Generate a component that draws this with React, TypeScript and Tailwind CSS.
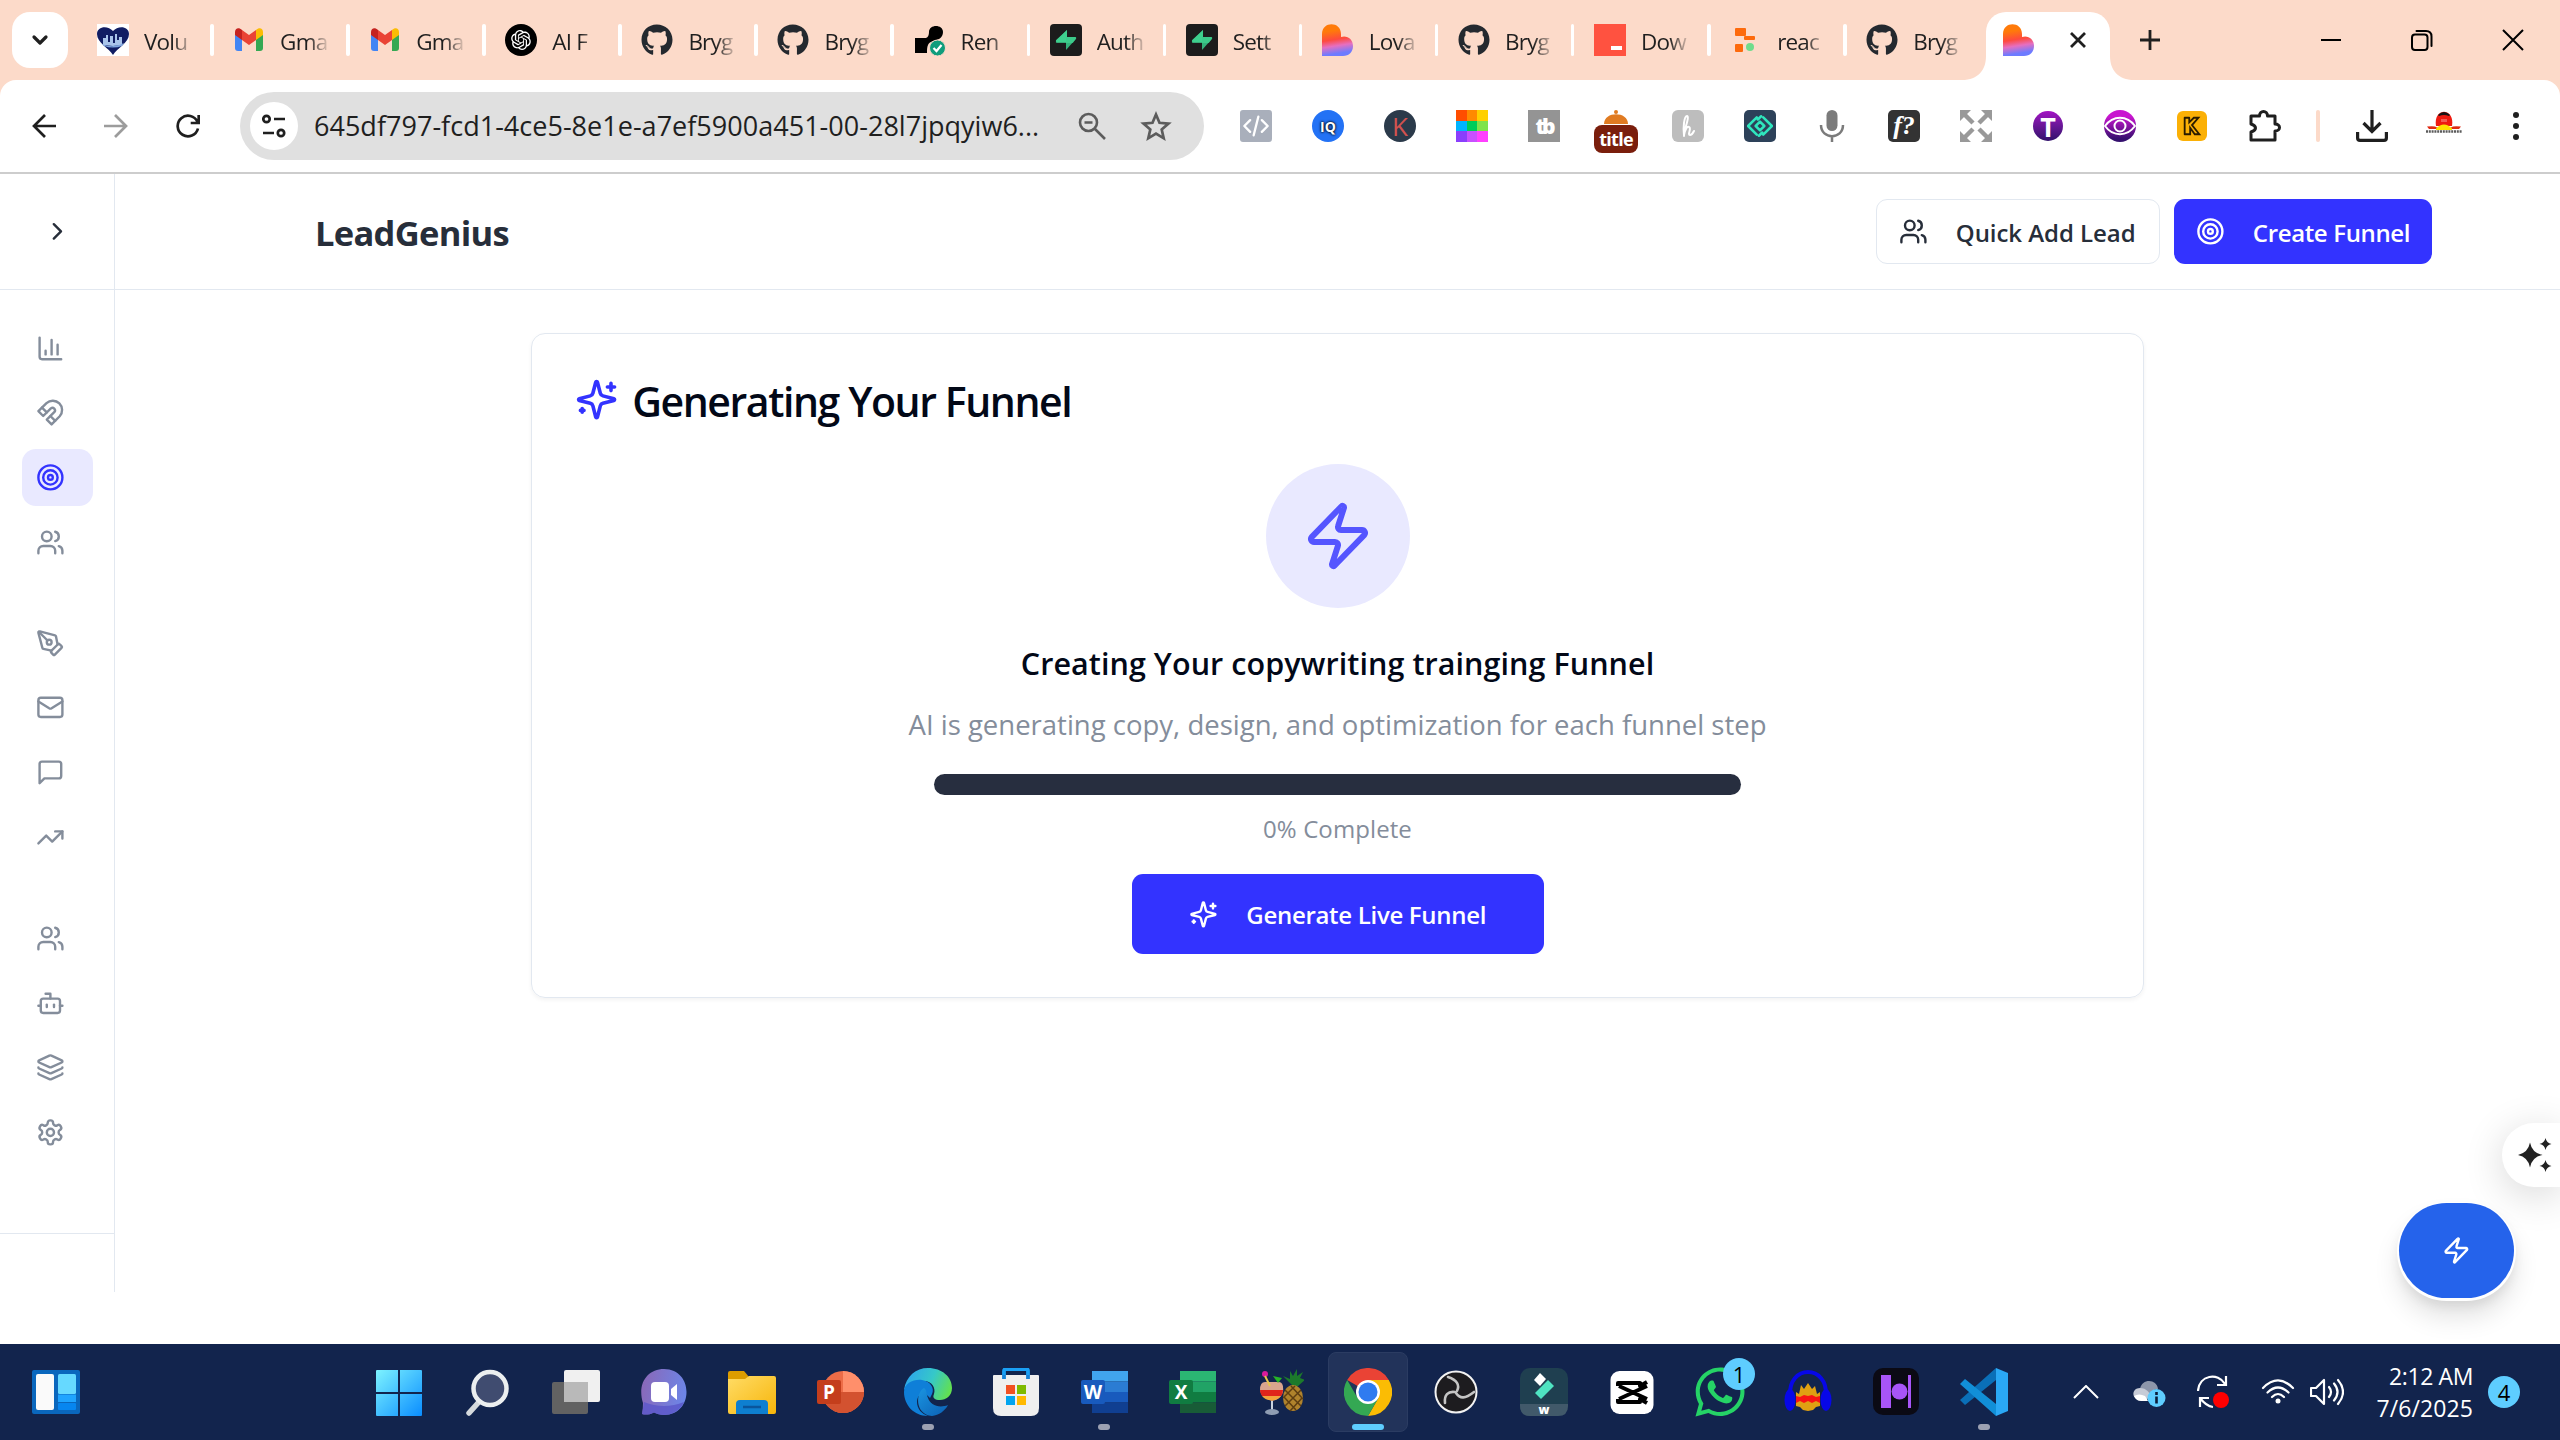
import React from "react";
import type { ReactNode } from "react";
import {
  Bot,
  ChartColumn,
  ChevronDown,
  ChevronRight,
  Layers,
  Mail,
  PenTool,
  Target,
  TrendingUp,
  Users,
  Zap,
} from "lucide-react";
import { FaGithub, FaWhatsapp } from "react-icons/fa";
import { RiOpenaiFill } from "react-icons/ri";

/* ---------- outline icons ---------- */

function Outline({ className, children }: { className: string; children: ReactNode }) {
  return (
    <svg
      viewBox="0 0 24 24"
      fill="none"
      stroke="currentColor"
      strokeWidth="2"
      strokeLinecap="round"
      strokeLinejoin="round"
      className={className}
    >
      {children}
    </svg>
  );
}

type IconProps = { className: string };

const Sparkles = ({ className }: IconProps) => (
  <Outline className={className}>
    <path d="M9.937 15.5A2 2 0 0 0 8.5 14.063l-6.135-1.582a.5.5 0 0 1 0-.962L8.5 9.936A2 2 0 0 0 9.937 8.5l1.582-6.135a.5.5 0 0 1 .963 0L14.063 8.5A2 2 0 0 0 15.5 9.937l6.135 1.581a.5.5 0 0 1 0 .964L15.5 14.063a2 2 0 0 0-1.437 1.437l-1.582 6.135a.5.5 0 0 1-.963 0z" />
    <path d="M20 3v4M22 5h-4M4 17v2M5 18H3" />
  </Outline>
);
const Magnet = ({ className }: IconProps) => (
  <Outline className={className}>
    <path d="m6 15-4-4 6.75-6.77a7.79 7.79 0 0 1 11 11L13 22l-4-4 6.39-6.36a2.14 2.14 0 0 0-3-3L6 15" />
    <path d="m5 8 4 4M12 15l4 4" />
  </Outline>
);
const Message = ({ className }: IconProps) => (
  <Outline className={className}>
    <path d="M21 15a2 2 0 0 1-2 2H7l-4 4V5a2 2 0 0 1 2-2h14a2 2 0 0 1 2 2z" />
  </Outline>
);
const Gear = ({ className }: IconProps) => (
  <Outline className={className}>
    <path d="M12.22 2h-.44a2 2 0 0 0-2 2v.18a2 2 0 0 1-1 1.73l-.43.25a2 2 0 0 1-2 0l-.15-.08a2 2 0 0 0-2.73.73l-.22.38a2 2 0 0 0 .73 2.73l.15.1a2 2 0 0 1 1 1.72v.51a2 2 0 0 1-1 1.74l-.15.09a2 2 0 0 0-.73 2.73l.22.38a2 2 0 0 0 2.73.73l.15-.08a2 2 0 0 1 2 0l.43.25a2 2 0 0 1 1 1.73V20a2 2 0 0 0 2 2h.44a2 2 0 0 0 2-2v-.18a2 2 0 0 1 1-1.73l.43-.25a2 2 0 0 1 2 0l.15.08a2 2 0 0 0 2.73-.73l.22-.39a2 2 0 0 0-.73-2.73l-.15-.08a2 2 0 0 1-1-1.74v-.5a2 2 0 0 1 1-1.74l.15-.09a2 2 0 0 0 .73-2.73l-.22-.38a2 2 0 0 0-2.73-.73l-.15.08a2 2 0 0 1-2 0l-.43-.25a2 2 0 0 1-1-1.73V4a2 2 0 0 0-2-2z" />
    <circle cx="12" cy="12" r="3" />
  </Outline>
);

/* ---------- favicons ---------- */

const HeartCity = () => (
  <svg viewBox="0 0 32 32" className="size-8">
    <rect width="32" height="32" fill="#fff" />
    <path d="M16 31C12 24 0 19 0 10 0 2 11 1 16 7c5-6 16-5 16 3 0 9-12 14-16 21z" fill="#111d63" />
    <path d="M6 21v-7h3V11h2v7h2V12h3v7h2v-9h2v6h2v-3h3v8l-9 1z" fill="#a9c4ea" />
    <path d="M5 20q11 5 22-1l-2 3q-9 3-18 0z" fill="#7fa6df" />
  </svg>
);
const Gmail = () => (
  <svg viewBox="0 0 32 32" className="size-8">
    <path d="M2 10v14a3 3 0 0 0 3 3h4V14z" fill="#4285f4" />
    <path d="M30 10v14a3 3 0 0 1-3 3h-4V14z" fill="#34a853" />
    <path d="M23 8v8l7-5V8c0-4-4-5-7-2z" fill="#fbbc04" />
    <path d="M9 6l7 5 7-5v10l-7 5-7-5z" fill="#ea4335" />
    <path d="M2 8v3l7 5V6C6 3 2 4 2 8z" fill="#c5221f" />
  </svg>
);
const ChatGpt = () => (
  <div className="flex size-8 items-center justify-center rounded-full bg-black text-white">
    <RiOpenaiFill className="size-[24px]" />
  </div>
);
const Github = () => <FaGithub className="size-8 text-[#24292f]" />;
const Render = () => (
  <svg viewBox="0 0 32 32" className="size-8">
    <path d="M1 29V14h11q3-1 3-6c0-8 14-8 14 0 0 6-5 8-10 9-5 2-6 4-6 12z" fill="#000" />
    <circle cx="23.500" cy="24" r="8" fill="#0f9d7c" stroke="#fcdac9" strokeWidth="1" />
    <path d="M19.500 24l3 3 5-6" fill="none" stroke="#fff" strokeWidth="2.200" />
  </svg>
);
const Supabase = () => (
  <svg viewBox="0 0 32 32" className="size-8">
    <rect width="32" height="32" rx="4" fill="#1c1c1c" />
    <path d="M17 6v12H7c-1 0-1.500-1-.8-2z" fill="#3ecf8e" />
    <path d="M16 26V13h9c1.200 0 1.600 1 .8 2z" fill="#34b27b" />
    <path d="M17 6v7h8c1.200 0 1.600 1 .8 2l-3 4H7c-1 0-1.500-1-.8-2z" fill="#3ecf8e" opacity=".8" />
  </svg>
);
const Lovable = () => (
  <svg viewBox="0 0 32 32" className="size-8">
    <defs>
      <linearGradient id="lovable" x1="0.350" y1="0" x2="0.500" y2="1">
        <stop offset="0.200" stopColor="#ff7a0a" />
        <stop offset="0.480" stopColor="#fe4a3e" />
        <stop offset="0.680" stopColor="#e66fc0" />
        <stop offset="0.920" stopColor="#6d7bff" />
      </linearGradient>
    </defs>
    <path d="M0 32V10C0-3 19-3 19 10v3c6-2 12 2 12 9 0 6-4 10-10 10z" fill="url(#lovable)" />
  </svg>
);
const RedBlock = () => (
  <div className="flex size-8 items-end justify-end bg-[#ff5240] pr-1 pb-[6px]">
    <div className="h-1 w-[11px] bg-white" />
  </div>
);
const Replit = () => (
  <svg viewBox="0 0 32 32" className="size-8">
    <rect x="5" y="4" width="11" height="8" rx="1" fill="#fd6a0c" />
    <rect x="14" y="12" width="11" height="4" rx="1" fill="#fd6a0c" />
    <rect x="5" y="20" width="8" height="8" rx="1" fill="#fd6a0c" />
    <circle cx="20" cy="23" r="4" fill="#6fdc8c" />
  </svg>
);

const tabs: { icon: ReactNode; label: string }[] = [
  { icon: <HeartCity />, label: "Volu" },
  { icon: <Gmail />, label: "Gma" },
  { icon: <Gmail />, label: "Gma" },
  { icon: <ChatGpt />, label: "AI F" },
  { icon: <Github />, label: "Bryg" },
  { icon: <Github />, label: "Bryg" },
  { icon: <Render />, label: "Ren" },
  { icon: <Supabase />, label: "Auth" },
  { icon: <Supabase />, label: "Sett" },
  { icon: <Lovable />, label: "Lova" },
  { icon: <Github />, label: "Bryg" },
  { icon: <RedBlock />, label: "Dow" },
  { icon: <Replit />, label: "reac" },
  { icon: <Github />, label: "Bryg" },
];

function TabStrip() {
  return (
    <div className="flex h-20 bg-[#fcdac9]">
      <div className="mt-3 ml-3 flex size-14 items-center justify-center rounded-[18px] bg-white">
        <ChevronDown className="size-6 text-[#1f1f1f]" strokeWidth={3.2} />
      </div>
      <div className="flex pt-6 pl-7">
        {tabs.map((t, i) => (
          <div key={i} className="flex h-8 w-[136.1px] shrink-0">
            <div className="ml-px size-8">{t.icon}</div>
            <div className="ml-[15px] w-[47px] text-[22.5px] leading-[35px] tracking-[-0.8px] whitespace-nowrap text-[#1f1f1f] [mask-image:linear-gradient(to_right,black_60%,rgba(0,0,0,0.15))]">
              {t.label}
            </div>
            {i < tabs.length - 1 && <div className="ml-[19px] h-8 w-[3.500px] rounded-sm bg-white" />}
          </div>
        ))}
      </div>
      <div className="-ml-[39px] flex pt-3">
        <svg viewBox="0 0 24 24" className="mt-11 size-6 text-white">
          <path d="M24 24H0C16 24 24 14 24 0z" fill="currentColor" />
        </svg>
        <div className="flex h-[68px] w-[124px] items-start rounded-t-[20px] bg-white pt-3 pl-[17px]">
          <Lovable />
          <Outline className="mt-1 ml-[31px] size-6 text-[#1f1f1f]">
            <path d="M5 5l14 14M19 5L5 19" strokeWidth="2.800" strokeLinecap="butt" />
          </Outline>
        </div>
        <svg viewBox="0 0 24 24" className="mt-11 size-6 text-white">
          <path d="M0 24h24C8 24 0 14 0 0z" fill="currentColor" />
        </svg>
      </div>
      <Outline className="mt-7 ml-1 size-6 text-[#1f1f1f]">
        <path d="M12 2v20M2 12h20" strokeWidth="2.800" strokeLinecap="butt" />
      </Outline>
      <div className="mr-[35px] ml-auto flex gap-[67px] pt-7 text-black">
        <Outline className="size-6">
          <path d="M2 12h20" strokeLinecap="butt" />
        </Outline>
        <Outline className="size-6">
          <rect x="2" y="6.500" width="15.500" height="15.500" rx="3" />
          <path d="M6.500 3H16q5.500 0 5.500 5.500V18" />
        </Outline>
        <Outline className="size-6">
          <path d="M2 2l20 20M22 2L2 22" strokeLinecap="butt" />
        </Outline>
      </div>
    </div>
  );
}

/* ---------- toolbar ---------- */

const extensions: ReactNode[] = [
  <div className="flex size-8 items-center justify-center rounded-[3px] bg-[#a9afbb]">
    <Outline className="size-7 text-white">
      <path d="M7 7l-5 5 5 5M17 7l5 5-5 5M14 4l-4 16" />
    </Outline>
  </div>,
  <div className="flex size-8 items-center justify-center rounded-full bg-[#2372f5] text-[14px] font-bold text-white [text-shadow:0_0_2px_black,0_0_3px_black]">
    IQ
  </div>,
  <div className="flex size-8 items-center justify-center rounded-full bg-[#2b3a4a] text-[26px] leading-none font-medium text-[#d2524f]">
    K
  </div>,
  <div className="grid size-8 grid-cols-3 grid-rows-3">
    <i className="bg-[#ff4d00]" />
    <i className="bg-[#ff8a00]" />
    <i className="bg-[#ffd000]" />
    <i className="bg-[#00b4ff]" />
    <i className="bg-[#00cc5a]" />
    <i className="bg-[#7fe34a]" />
    <i className="bg-[#8a3ffc]" />
    <i className="bg-[#c850ff]" />
    <i className="bg-[#ff40ff]" />
  </div>,
  <div className="flex size-8 items-center justify-center bg-[#949494] text-[21px] leading-none font-extrabold tracking-[-3px] text-white">
    tb
  </div>,
  <div className="flex h-[44px] w-11 flex-col items-center">
    <svg viewBox="0 0 26 14" className="h-[14px] w-[26px]">
      <circle cx="13" cy="2" r="2" fill="#e07b22" />
      <path d="M1 14C1 1 25 1 25 14z" fill="#e07b22" />
    </svg>
    <div className="mt-px flex h-[28px] w-11 items-center justify-center rounded-[8px] bg-[#7a1e0c] text-[18px] leading-none font-bold tracking-[-0.7px] text-white">
      title
    </div>
  </div>,
  <div className="flex size-8 items-center justify-center rounded-[6px] bg-[#bdbdbd]">
    <Outline className="size-6 text-white">
      <path d="M8 22c0-7 6-19 3-20-3 0-4 12-3 19 1-5 3-9 5-8 3 1-2 8 1 8 2 0 3-2 4-4" />
    </Outline>
  </div>,
  <div className="flex size-8 items-center justify-center rounded-[5px] bg-[#2d4159]">
    <Outline className="size-[26px] text-[#2fe6bd]">
      <path d="M9 4l-8 8 8 8M15 4l8 8-8 8M12 8l-4 4 4 4 4-4zM13 3l-3 3M11 21l3-3" strokeWidth="2.300" />
    </Outline>
  </div>,
  <svg viewBox="0 0 32 32" className="size-8">
    <rect x="10.500" y="0" width="11" height="21" rx="5.500" fill="#7b7b7b" />
    <path d="M5 15c0 15 22 15 22 0M16 26v6" fill="none" stroke="#7b7b7b" strokeWidth="2.500" />
  </svg>,
  <div className="flex size-8 items-center justify-center rounded-[5px] bg-[#333] font-['Liberation_Serif',serif] text-[26px] leading-none font-bold text-white italic">
    f?
  </div>,
  <svg viewBox="0 0 32 32" className="size-8" fill="#999" stroke="#999" strokeWidth="4.500">
    <path d="M5 5l8 8M27 5l-8 8M5 27l8-8M27 27l-8-8" />
    <path d="M0 0h11L0 11zM32 0H21l11 11zM0 32h11L0 21zM32 32H21l11-11z" stroke="none" />
  </svg>,
  <div className="flex size-[30px] items-center justify-center rounded-full bg-linear-to-b from-[#a312c4] to-[#31106b] text-[27px] leading-none font-bold text-white">
    T
  </div>,
  <svg viewBox="0 0 32 32" className="size-8">
    <defs>
      <linearGradient id="eye" x1="0" y1="0" x2="0" y2="1">
        <stop offset="0.200" stopColor="#c915d0" />
        <stop offset="0.900" stopColor="#35106e" />
      </linearGradient>
    </defs>
    <circle cx="16" cy="16" r="16" fill="url(#eye)" />
    <path d="M1 16c8-11 22-11 30 0-8 11-22 11-30 0z" fill="none" stroke="#fff" strokeWidth="2" />
    <circle cx="16" cy="16" r="5.500" fill="none" stroke="#fff" strokeWidth="2" />
  </svg>,
  <div className="flex size-[30px] items-center justify-center rounded-[6px] bg-[#fbb006]">
    <Outline className="size-[22px] text-[#2b1c00]">
      <path d="M4 3v18M9 3v5l5-5h5l-7 8 8 10h-5l-5-7v7H4M4 3h5" strokeLinejoin="miter" />
    </Outline>
  </div>,
  <svg viewBox="0 0 36 36" className="size-9">
    <path
      d="M5 8h8.500c0-6 8-6 8 0H29v8c6 0 6 7 0 7v9H5v-8c6-2 6-6 0-8z"
      fill="none"
      stroke="#1f1f1f"
      strokeWidth="3"
      strokeLinejoin="round"
    />
  </svg>,
];

function Toolbar() {
  return (
    <div className="h-[94px] bg-[#fcdac9]">
      <div className="flex h-[94px] items-center rounded-t-[16px] border-b-2 border-[#cdcdcd] bg-white">
        <div className="ml-8 flex gap-12 text-[#1f1f1f]">
          <Outline className="size-6">
            <path d="M24 12H2.500M13 1L2 12l11 11" strokeWidth="2.700" strokeLinecap="butt" strokeLinejoin="miter" />
          </Outline>
          <Outline className="size-6 text-[#9c9c9c]">
            <path d="M0 12h21.500M11 1l11 11-11 11" strokeWidth="2.700" strokeLinecap="butt" strokeLinejoin="miter" />
          </Outline>
          <Outline className="size-6">
            <path d="M22 14.500A10.300 10.300 0 1 1 21.500 8M22.700 1v8h-8" strokeWidth="2.700" strokeLinecap="butt" strokeLinejoin="miter" />
          </Outline>
        </div>
        <div className="ml-10 flex h-[68px] w-[964px] items-center rounded-full bg-[#e0e0e0]">
          <div className="ml-[10px] flex size-12 items-center justify-center rounded-full bg-white">
            <Outline className="size-6 text-[#1f1f1f]">
              <g strokeWidth="2.700" strokeLinecap="butt">
                <circle cx="4.500" cy="5" r="3.200" />
                <path d="M12 5h11M1 19h11" />
                <circle cx="19" cy="19" r="3.200" />
              </g>
            </Outline>
          </div>
          <div className="ml-4 w-[730px] text-[27px] leading-[36px] tracking-[0.02px] whitespace-nowrap text-[#1f1f1f]">
            645df797-fcd1-4ce5-8e1e-a7ef5900a451-00-28l7jpqyiw6...
          </div>
          <svg viewBox="0 0 28 28" className="ml-[34px] size-7" fill="none" stroke="#5c5c5c" strokeWidth="2.600">
            <circle cx="10.500" cy="10.500" r="8.500" />
            <path d="M17 17l10 10M6.500 10.500h8" />
          </svg>
          <svg viewBox="0 0 32 32" className="ml-[34px] size-8" fill="none" stroke="#5c5c5c" strokeWidth="2.700">
            <path d="M16 4.500l3.500 8.300 9 .8-6.800 5.900 2 8.800L16 23.600l-7.700 4.700 2-8.800-6.800-5.900 9-.8z" />
          </svg>
        </div>
        <div className="ml-4 flex">
          {extensions.map((e, i) => (
            <div key={i} className="flex h-8 w-[72px] items-center justify-center">
              {i === 5 ? <div className="pt-3">{e}</div> : e}
            </div>
          ))}
        </div>
        <div className="ml-4 h-8 w-1 rounded-sm bg-[#fcdac9]" />
        <svg viewBox="0 0 32 32" className="ml-9 size-8" fill="none" stroke="#1f1f1f" strokeWidth="3.200">
          <path d="M16 0v21M7.500 13l8.500 8.500 8.500-8.500M1.600 22v6q0 2.400 2.400 2.400h24q2.400 0 2.400-2.400v-6" />
        </svg>
        <svg viewBox="0 0 40 24" className="mt-[-6px] ml-9 h-6 w-10">
          <path d="M12 15c-3-19 19-19 16 0z" fill="#ef1a10" />
          <path d="M14 4q6-6 12 0l-1 1q-5-2-10 0z" fill="#151515" />
          <rect x="17" y="8" width="6" height="3" fill="#fbb" opacity=".4" />
          <path d="M3 15.500q8-1 10 1h14q2-2 10-1l-2 2.500H5z" fill="#e02a12" />
          <path d="M12 17.500q8-8 16 0v1.500H12z" fill="#ffe100" />
          <path d="M2 20.500h36" stroke="#5b5b5b" strokeWidth="2.500" strokeDasharray="2 .8" />
        </svg>
        <svg viewBox="0 0 8 32" className="ml-12 h-8 w-2 text-[#1f1f1f]" fill="currentColor">
          <circle cx="4" cy="5" r="3" />
          <circle cx="4" cy="16" r="3" />
          <circle cx="4" cy="27" r="3" />
        </svg>
      </div>
    </div>
  );
}

/* ---------- application ---------- */

const icon = "size-[28.8px]";
const navGroups: ReactNode[][] = [
  [<ChartColumn className={icon} />, <Magnet className={icon} />, <Target className={icon} />, <Users className={icon} />],
  [<PenTool className={icon} />, <Mail className={icon} />, <Message className={icon} />, <TrendingUp className={icon} />],
  [<Users className={icon} />, <Bot className={icon} />, <Layers className={icon} />, <Gear className={icon} />],
];

function Sidebar() {
  return (
    <aside className="flex h-[1118px] w-[115px] shrink-0 flex-col border-r border-[#e2e8f0]">
      <div className="flex h-[116px] items-center justify-center border-b border-[#e2e8f0]">
        <ChevronRight className="size-[28.8px] text-[#272e3a]" />
      </div>
      <nav className="flex flex-1 flex-col gap-[43.2px] pt-[29.2px] pl-[21.6px] text-[#848d9b]">
        {navGroups.map((g, gi) => (
          <div key={gi} className="flex flex-col gap-[7.200px]">
            {g.map((item, i) => (
              <div
                key={i}
                className={
                  gi === 0 && i === 2
                    ? "flex h-[57.6px] w-[71px] items-center rounded-[14px] bg-[#e9e9ff] pl-[14.4px] text-[#3333ff]"
                    : "flex h-[57.6px] w-[71px] items-center pl-[14.4px]"
                }
              >
                {item}
              </div>
            ))}
          </div>
        ))}
      </nav>
      <div className="h-[59px] border-t border-[#e2e8f0]" />
    </aside>
  );
}

function Header() {
  return (
    <header className="flex h-[116px] items-center border-b border-[#e2e8f0] pr-32 pl-[200px] text-[#272e3a]">
      <h1 className="pt-[2px] text-[34.5px] leading-[50px] font-bold tracking-[-0.7px]">LeadGenius</h1>
      <div className="ml-auto flex gap-[14px] text-[24px] font-semibold">
        <button className="flex h-[65px] w-[284px] items-center rounded-[11px] border border-[#e2e8f0] pl-[22px]">
          <Users className="size-[28.8px]" />
          <span className="ml-[28px] pt-[2px] tracking-[-0.05px] whitespace-nowrap">Quick Add Lead</span>
        </button>
        <button className="flex h-[65px] w-[258px] items-center rounded-[11px] bg-[#3333ff] pl-[22px] text-white">
          <Target className="size-[28.8px]" />
          <span className="ml-[28px] pt-[2px] tracking-[-0.35px] whitespace-nowrap">Create Funnel</span>
        </button>
      </div>
    </header>
  );
}

function FunnelCard() {
  return (
    <section className="mt-[43px] ml-[416px] flex h-[665px] w-[1613px] flex-col items-center rounded-[14px] border border-[#e2e8f0] px-[43px] pt-[43px] shadow-[0_2px_4px_rgba(0,0,0,0.05)]">
      <div className="flex h-[45px] w-full items-center">
        <Sparkles className="size-[43.2px] text-[#3333ff]" />
        <h2 className="ml-[14px] pt-[3px] text-[41px] leading-[45px] font-semibold tracking-[-1.42px] whitespace-nowrap text-[#020817]">
          Generating Your Funnel
        </h2>
      </div>
      <div className="mt-[42px] flex size-36 items-center justify-center rounded-full bg-[#e9e9ff]">
        <Zap className="size-[72px] text-[#5555ff]" />
      </div>
      <h3 className="mt-[30px] text-[30.5px] leading-[50px] font-semibold tracking-[0.06px] whitespace-nowrap text-[#020817]">
        Creating Your copywriting trainging Funnel
      </h3>
      <p className="mt-[15px] text-[27.5px] leading-[44px] whitespace-nowrap text-[#848d9b]">
        AI is generating copy, design, and optimization for each funnel step
      </p>
      <div className="mt-[27px] h-[21px] w-[807px] rounded-full bg-[#272e3f]" />
      <p className="mt-4 text-[24px] leading-9 tracking-[0.1px] whitespace-nowrap text-[#848d9b]">0% Complete</p>
      <button className="mt-[27px] flex h-20 w-[412px] items-center rounded-[11px] bg-[#3333ff] pl-[57px] text-[24px] font-semibold tracking-[-0.3px] text-white">
        <Sparkles className="size-[28.8px]" />
        <span className="ml-[29px] pt-px whitespace-nowrap">Generate Live Funnel</span>
      </button>
    </section>
  );
}

function FloatingButtons() {
  return (
    <>
      <div className="absolute top-[949px] right-0 flex h-16 w-[58px] items-center rounded-l-full bg-white pl-4 shadow-[0_8px_40px_rgba(0,0,0,0.16)]">
        <svg viewBox="0 0 34 34" className="size-[34px] text-[#222]" fill="currentColor">
          <path d="M12 4.500Q14 15 24.500 17 14 19 12 29.500 10 19 -.5 17 10 15 12 4.500z" />
          <path d="M27.500 0Q28.500 5 33.500 6 28.500 7 27.500 12 26.500 7 21.500 6 26.500 5 27.500 0z" />
          <path d="M27.500 22Q28.500 27 33.500 28 28.500 29 27.500 34 26.500 29 21.500 28 26.500 27 27.500 22z" />
        </svg>
      </div>
      <div className="absolute top-[1029px] right-[46px] flex h-[95px] w-[115px] items-center justify-center rounded-full bg-[#2563eb] text-white shadow-[0_1px_0_2px_#fff,0_18px_27px_rgba(0,0,0,0.12),0_7px_12px_rgba(0,0,0,0.08)]">
        <Zap className="size-[28.8px]" />
      </div>
    </>
  );
}

/* ---------- taskbar ---------- */

function Office({ letter, plate, bands }: { letter: string; plate: string; bands: string[] }) {
  return (
    <svg viewBox="0 0 48 48" className="size-12">
      {bands.map((b, i) => (
        <rect key={i} x="12" y={3 + i * 10.5} width="36" height="10.500" fill={b} />
      ))}
      <rect x="1" y="12" width="24" height="24" rx="2" fill={plate} />
      <text x="13" y="31" textAnchor="middle" fontSize="19" fontWeight="700" fill="#fff">
        {letter}
      </text>
    </svg>
  );
}

type App = { art: ReactNode; mark?: "dot" | "active" };

const apps: App[] = [
  {
    art: (
      <svg viewBox="1 0 48 48" className="size-12">
        <defs>
          <linearGradient id="win" x1="0" y1="0" x2="1" y2="1">
            <stop offset="0" stopColor="#7df3ff" />
            <stop offset="1" stopColor="#0a8dff" />
          </linearGradient>
        </defs>
        <path d="M1 3q0-1 1-1h21v22H1zM25 2h21q1 0 1 1v21H25zM1 26h22v22H2q-1 0-1-1zM25 26h22v21q0 1-1 1H25z" fill="url(#win)" />
      </svg>
    ),
  },
  {
    art: (
      <svg viewBox="0 0 48 48" className="size-12">
        <path d="M14 35L5 45" stroke="#d5dadd" strokeWidth="5.500" strokeLinecap="round" />
        <circle cx="26" cy="20.500" r="16.500" fill="#404c70" stroke="#eceff0" strokeWidth="4.500" />
      </svg>
    ),
  },
  {
    art: (
      <svg viewBox="0 0 48 48" className="size-12">
        <rect x="0" y="14" width="36" height="32" rx="2" fill="#626262" />
        <rect x="12" y="2" width="36" height="32" rx="2" fill="#f0f0f0" />
        <rect x="12" y="14" width="24" height="20" fill="#b9b9b9" />
      </svg>
    ),
  },
  {
    art: (
      <svg viewBox="0 0 48 48" className="size-12">
        <defs>
          <linearGradient id="chat" x1="0" y1="0.300" x2="1" y2="0.500">
            <stop offset="0" stopColor="#8a68b8" />
            <stop offset="1" stopColor="#6c86e8" />
          </linearGradient>
        </defs>
        <path d="M24 1c30 0 30 46 0 46-4 0-7-1-10-2.500C9 47 5 47 2 46q1-5 1-11C-3 16 7 1 24 1z" fill="url(#chat)" />
        <path d="M4 34Q24 42 44 34C40 44 30 47 24 47c-4 0-7-1-10-2.500C9 47 5 47 2 46z" fill="#5a56c9" opacity=".8" />
        <rect x="11" y="14" width="18" height="20" rx="4" fill="#fff" />
        <path d="M31 21l6-5v16l-6-5z" fill="#fff" />
      </svg>
    ),
  },
  {
    art: (
      <svg viewBox="0 0 48 48" className="size-12">
        <defs>
          <linearGradient id="folder" x1="0" y1="0" x2="1" y2="1">
            <stop offset="0" stopColor="#ffdc66" />
            <stop offset="1" stopColor="#f7b50a" />
          </linearGradient>
        </defs>
        <path d="M0 5q0-2 2-2h14l5 6-4 6H0z" fill="#dd9d00" />
        <path d="M0 11h17l4-3h25q2 0 2 2v34q0 2-2 2H2q-2 0-2-2z" fill="url(#folder)" />
        <path d="M8 46V36q0-4 4-4h24q4 0 4 4v10z" fill="#0e7fd0" />
        <path d="M15 39h18" stroke="#0a559c" strokeWidth="2.500" />
      </svg>
    ),
  },
  {
    art: (
      <svg viewBox="0 0 48 48" className="size-12">
        <circle cx="27" cy="24" r="21" fill="#ed6c47" />
        <path d="M27 3a21 21 0 0 1 21 21H27z" fill="#ff8f6b" />
        <path d="M48 24a21 21 0 0 1-42 0z" fill="#d35230" />
        <rect x="1" y="12" width="24" height="24" rx="2" fill="#c43e1c" />
        <text x="13" y="31" textAnchor="middle" fontSize="19" fontWeight="700" fill="#fff">
          P
        </text>
      </svg>
    ),
  },
  {
    mark: "dot",
    art: (
      <svg viewBox="0 0 48 48" className="size-12">
        <defs>
          <linearGradient id="edge-top" x1="0" y1="0.300" x2="1" y2="0.600">
            <stop offset="0" stopColor="#2da5ec" />
            <stop offset="0.550" stopColor="#36c8c8" />
            <stop offset="1" stopColor="#63e04f" />
          </linearGradient>
          <linearGradient id="edge-low" x1="0" y1="0" x2="1" y2="1">
            <stop offset="0" stopColor="#1a94e0" />
            <stop offset="1" stopColor="#0b5fb4" />
          </linearGradient>
        </defs>
        <path d="M0 22C2 8 12 0 24 0c14 0 24 9 24 20 0 8-6 12-12 12-5 0-8-2-6-6 2-6-2-13-10-13S4 16 0 22z" fill="url(#edge-top)" />
        <path d="M0 24C0 15 10 11 18 12c8 1 13 8 10 14-1 2-2 4-2 4-6-8-13-4-13 4 0 7 5 12 11 14C10 48 0 37 0 24z" fill="#0f7fd8" />
        <path d="M20 20c-8 4-10 26 8 28 7-1 13-5 16-11-10 4-18-1-20-7-2-4-1-8-4-10z" fill="url(#edge-low)" />
      </svg>
    ),
  },
  {
    art: (
      <svg viewBox="0 0 48 48" className="size-12">
        <path d="M12 11V3q0-2 2-2h20q2 0 2 2v8" fill="none" stroke="#1aa0f5" strokeWidth="3.800" />
        <path d="M1 8q0-1 1-1h44q1 0 1 1v32q0 8-8 8H9q-8 0-8-8z" fill="#efefef" />
        <path d="M12 7v4M36 7v4" stroke="#1583d8" strokeWidth="3.800" />
        <rect x="14" y="17" width="9" height="9" fill="#f25022" />
        <rect x="25" y="17" width="9" height="9" fill="#7fba00" />
        <rect x="14" y="28" width="9" height="9" fill="#00a4ef" />
        <rect x="25" y="28" width="9" height="9" fill="#ffb900" />
      </svg>
    ),
  },
  { mark: "dot", art: <Office letter="W" plate="#185abd" bands={["#41a5ee", "#2b7cd3", "#185abd", "#103f91"]} /> },
  { art: <Office letter="X" plate="#107c41" bands={["#2bb673", "#21a366", "#107c41", "#185c37"]} /> },
  {
    art: (
      <svg viewBox="0 0 48 48" className="size-12">
        <path d="M37 18L27 8l7 3 0-8 3 5 4-7 0 7 6-4-3 6 5 2-7 6z" fill="#1c7a2b" />
        <ellipse cx="37" cy="30" rx="10" ry="13" fill="#b0832c" />
        <path d="M29 22l16 16M28 29l12 13M35 18l12 13M45 22L29 38M46 30L34 43M39 18L27 30" stroke="#5e3e12" strokeWidth="1.500" />
        <path d="M4 22q0-8 5-8h14q5 0 4 10-3 8-11 9Q5 30 4 22z" fill="#d9a58e" />
        <path d="M4 22h23q0 4-2 6H6q-2-3-2-6z" fill="#e0241b" />
        <path d="M6 28h19q-3 4-9 4.500Q9 32 6 28z" fill="#f3a33b" />
        <path d="M16 33v10" stroke="#c9d3e0" strokeWidth="2" />
        <ellipse cx="16" cy="44" rx="7" ry="3" fill="#8f9db3" />
        <circle cx="9" cy="6" r="3" fill="#d91a9c" />
        <path d="M9 8l5 10" stroke="#e6c64a" strokeWidth="2" />
        <path d="M17 8l9 2-4 5z" fill="#27b427" />
      </svg>
    ),
  },
  {
    mark: "active",
    art: (
      <svg viewBox="0 0 48 48" className="size-12">
        <path d="M24 24L3.200 12A24 24 0 0 1 44.800 12z" fill="#ea4335" />
        <path d="M24 12h20.800A24 24 0 0 1 24 48l10.400-18z" fill="#fbbc04" />
        <path d="M3.200 12A24 24 0 0 0 24 48l10.400-18L13.600 30z" fill="#34a853" />
        <circle cx="24" cy="24" r="12" fill="#fff" />
        <circle cx="24" cy="24" r="9.500" fill="#2f7bf0" />
      </svg>
    ),
  },
  {
    art: (
      <svg viewBox="0 0 48 48" className="size-12">
        <circle cx="24" cy="24" r="20.500" fill="#1d1c1f" stroke="#f2f2f2" strokeWidth="2" />
        <path
          d="M25 23c3-6 0-11-9-14M23 24c-7-1-11 3-10 11M24 25c4 6 9 6 18-1"
          fill="none"
          stroke="#c4c4c4"
          strokeWidth="2.600"
          strokeLinecap="round"
        />
      </svg>
    ),
  },
  {
    art: (
      <svg viewBox="0 0 48 48" className="size-12">
        <rect width="48" height="48" rx="10" fill="#1f3f50" />
        <path d="M0 36h48v2q0 10-10 10H10Q0 48 0 38z" fill="#41596a" />
        <path d="M20 5l6 6-6 7-6-6z" fill="#fff" />
        <path d="M28 12l6 6-13 13-6-6z" fill="#4fe3c1" />
        <text x="24" y="46" textAnchor="middle" fontSize="12" fontWeight="800" fill="#fff">
          w
        </text>
      </svg>
    ),
  },
  {
    art: (
      <svg viewBox="0 0 48 48" className="size-12">
        <rect x="2.500" y="3" width="43" height="43" rx="9" fill="#fff" />
        <path d="M10 18v-3h22v3l7-4M10 31v3h22v-3l7 4M11 18l28 13M11 31l28-13" fill="none" stroke="#000" strokeWidth="4" strokeLinejoin="round" />
      </svg>
    ),
  },
  {
    art: (
      <div className="relative size-12">
        <FaWhatsapp className="-m-1 size-14 text-[#25d366]" />
        <div className="absolute top-[-10px] left-[27px] flex size-8 items-center justify-center rounded-full bg-[#5ecdff] text-[22px] leading-none text-black">
          1
        </div>
      </div>
    ),
  },
  {
    art: (
      <svg viewBox="0 0 48 48" className="size-12">
        <path d="M6 28C4-4 44-4 42 28" fill="none" stroke="#0707e8" strokeWidth="4" />
        <ellipse cx="6" cy="32" rx="5.500" ry="11" fill="#0707e8" />
        <ellipse cx="42" cy="32" rx="5.500" ry="11" fill="#0707e8" />
        <path d="M12 38V24l3 2 2-9 3 4 4-6 4 6 3-3 2 8 3-2v14l-4 1-3 3-5 1-5-1-3-3z" fill="#e0a012" />
        <path d="M12 28l4 1 4-2 4 1 4-1 4 2 4-1v7l-4-2-4 2-4-2-4 2-4-2-4 2z" fill="#f81414" />
      </svg>
    ),
  },
  {
    art: (
      <svg viewBox="0 0 48 48" className="size-12">
        <rect x="1" y="0" width="46" height="47" rx="10" fill="#0b0a14" />
        <rect x="9" y="7" width="10" height="33" fill="#a855f7" />
        <rect x="36" y="7" width="3" height="33" fill="#a855f7" />
        <circle cx="27.500" cy="23.500" r="8" fill="#a855f7" />
      </svg>
    ),
  },
  {
    mark: "dot",
    art: (
      <svg viewBox="0 0 48 48" className="size-12">
        <path d="M0 32l5 5L36 12V0z" fill="#0a6fb8" />
        <path d="M0 16l5-5 31 25v12z" fill="#118fd8" />
        <path d="M36 0l12 5v38l-12 5z" fill="#2aa8f5" />
      </svg>
    ),
  },
];

function AppTile({ art, mark }: App) {
  const box =
    mark === "active"
      ? "flex h-20 w-20 flex-col items-center rounded-[8px] border border-[#2b3c62] bg-[#22335a] pt-[15px]"
      : "flex h-20 w-20 flex-col items-center pt-4";
  return (
    <div className={box}>
      {art}
      {mark === "dot" && <div className="mt-2 h-[6px] w-3 rounded-full bg-[#9ca1b2]" />}
      {mark === "active" && <div className="mt-2 h-[6px] w-8 rounded-full bg-[#5ecdff]" />}
    </div>
  );
}

function Taskbar() {
  return (
    <footer className="flex h-24 bg-[#12244d] pt-2 text-white">
      <svg viewBox="0 0 48 44" className="mt-[18px] ml-8 h-11 w-12">
        <rect width="48" height="44" rx="2" fill="#0a67bd" />
        <rect x="4" y="4" width="18" height="36" rx="2" fill="#fafafa" />
        <rect x="26" y="4" width="18" height="20" rx="1.500" fill="#66d9ff" />
        <rect x="26" y="24.500" width="18" height="7.500" fill="#1fa4ff" />
        <rect x="26" y="33" width="18" height="7" rx="1" fill="#0786f0" />
      </svg>
      <div className="ml-[280px] flex gap-2">
        {apps.map((a, i) => (
          <AppTile key={i} art={a.art} mark={a.mark} />
        ))}
      </div>
      <div className="ml-[49px] flex h-20 items-center">
        <svg viewBox="0 0 26 14" className="h-[14px] w-[26px]" fill="none" stroke="#fff" strokeWidth="2">
          <path d="M1 13L13 1l12 12" />
        </svg>
        <svg viewBox="0 0 34 28" className="mt-[4px] ml-[34px] h-7 w-[34px]">
          <path d="M7 9C9-2 24-1 25 9c-4 0-8 3-9 8z" fill="#8d96aa" />
          <path d="M8 20C-2 20-2 8 7 8c5 0 8 3 10 6l-3 6z" fill="#c7cbd6" />
          <path d="M1 16q5-3 11 0l3 5H8q-5 0-7-5z" fill="#fff" />
          <circle cx="23.500" cy="18" r="9" fill="#5ecdff" />
          <path d="M23.500 12v3M23.500 16.500v7" stroke="#0a1c3a" strokeWidth="2.600" />
        </svg>
        <svg viewBox="0 0 32 34" className="ml-[30px] h-[34px] w-8" fill="none" stroke="#fff" strokeWidth="2.200">
          <path d="M1 16C2 0 21-3 28 9M29 1v9h-9M3 32V23h9M3 23q6 8 13 9" />
          <circle cx="24" cy="25" r="8" fill="#f00" stroke="none" />
        </svg>
        <svg viewBox="0 0 34 26" className="ml-[32px] h-[26px] w-[34px]" fill="none" stroke="#fff" strokeWidth="2.200" strokeLinecap="round">
          <path d="M2 9Q17-6 32 9M6.500 13.500q10.500-10 21 0M11 18q6-6 12 0" />
          <circle cx="17" cy="22" r="2.500" fill="#fff" stroke="none" />
        </svg>
        <svg viewBox="0 0 34 28" className="ml-[15px] h-7 w-[34px]" fill="none" stroke="#fff" strokeWidth="2.200" strokeLinejoin="round">
          <path d="M1 10h5l8-8v24l-8-8H1zM19 9q4 5 0 10M24 5.500q7 8.500 0 17M28 2q10 12 0 24" strokeLinecap="round" />
        </svg>
        <div className="w-[129px] text-right text-[23px] leading-8 whitespace-nowrap">
          <div className="tracking-[-0.4px]">2:12 AM</div>
          <div className="tracking-[0.1px]">7/6/2025</div>
        </div>
        <div className="ml-[15px] flex size-8 items-center justify-center rounded-full bg-[#5ecdff] text-[22px] leading-none text-black">
          4
        </div>
      </div>
    </footer>
  );
}

export default function App() {
  return (
    <div className="h-[1440px] w-[2560px] overflow-hidden bg-white font-['Open_Sans','Noto_Sans',sans-serif]">
      <TabStrip />
      <Toolbar />
      <div className="relative flex h-[1170px] overflow-hidden">
        <Sidebar />
        <main className="flex-1">
          <Header />
          <FunnelCard />
        </main>
        <FloatingButtons />
      </div>
      <Taskbar />
    </div>
  );
}
